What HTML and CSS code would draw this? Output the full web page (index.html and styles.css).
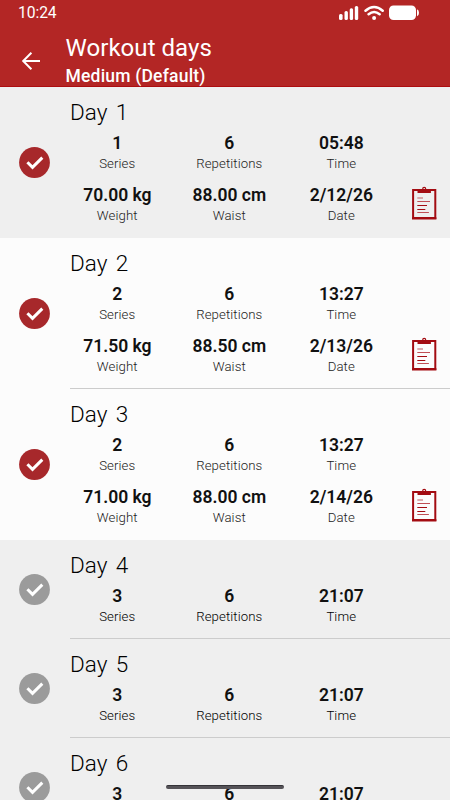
FILE: index.html
```html
<!DOCTYPE html>
<html lang="en">
<head>
<meta charset="utf-8">
<title>Workout days</title>
<link rel="stylesheet" href="styles.css">
</head>
<body>
<svg class="defs" width="0" height="0" aria-hidden="true">
  <symbol id="check" viewBox="0 0 31 31"><circle cx="15.5" cy="15.5" r="15.4" fill="currentColor"/><path d="M8.4 15.3l5.1 5.1 9.8-9.8" fill="none" stroke="#fff" stroke-width="3"/></symbol>
  <symbol id="clip" viewBox="0 0 25 34"><path d="M1.1 4h22.2v28H1.1z" fill="none" stroke="#a30c12" stroke-width="2"/><path d="M0 31.2h24.4v2.2H0zM5.5 4h13.4v3H5.5z" fill="#a30c12"/><circle cx="12.2" cy="2.9" r="1.5" fill="none" stroke="#a30c12" stroke-width="1.2"/><path d="M5.3 15.5H18M5.3 26.5h11.6" stroke="#c05056"/><path d="M5.3 12h5.7" stroke="#d18b8e" stroke-width="1.4"/><path d="M5.3 19.5h9.7M5.3 23.5h8" stroke="#a30c12"/></symbol>
</svg>
<div class="screen">
  <header>
    <div class="status">
      <span class="clock">10:24</span>
      <svg width="82" height="18" viewBox="0 0 82 18" fill="#fff">
        <rect x="1" y="10" width="3.6" height="6" rx="1.5"/><rect x="6.5" y="7" width="3.4" height="9" rx="1.5"/><rect x="11.7" y="4.2" width="3.4" height="11.8" rx="1.5"/><rect x="16.8" y="2" width="3.4" height="14" rx="1.5"/>
        <path d="M27.5 6.7q8.6-7.4 17.2 0M30.6 10.3q5.5-4.7 11 0" fill="none" stroke="#fff" stroke-width="2.5" stroke-linecap="round"/><circle cx="36.1" cy="14" r="2"/>
        <rect x="51" y="1.5" width="27" height="14.5" rx="4.5"/><path d="M79 5.3q2 .5 2 3.5t-2 3.5z"/>
      </svg>
    </div>
    <div class="bar">
      <svg class="back" width="20" height="20" viewBox="0 0 20 20" fill="none" stroke="#fff" stroke-width="2"><path d="M19 10H2.3M10.4 1.8L2.2 10l8.2 8.2"/></svg>
      <div><h1>Workout days</h1><p class="level">Medium (Default)</p></div>
    </div>
  </header>
  <main>
    <section class="day shaded">
      <svg class="mark"><use href="#check"/></svg>
      <h2>Day <span>1</span></h2>
      <div class="stats">
        <div><b>1</b><small>Series</small></div><div><b>6</b><small>Repetitions</small></div><div><b>05:48</b><small>Time</small></div>
        <div><b>70.00 kg</b><small>Weight</small></div><div><b>88.00 cm</b><small>Waist</small></div><div><b>2/12/26</b><small>Date</small></div>
      </div>
      <svg class="note"><use href="#clip"/></svg>
    </section>
    <section class="day lined">
      <svg class="mark"><use href="#check"/></svg>
      <h2>Day <span>2</span></h2>
      <div class="stats">
        <div><b>2</b><small>Series</small></div><div><b>6</b><small>Repetitions</small></div><div><b>13:27</b><small>Time</small></div>
        <div><b>71.50 kg</b><small>Weight</small></div><div><b>88.50 cm</b><small>Waist</small></div><div><b>2/13/26</b><small>Date</small></div>
      </div>
      <svg class="note"><use href="#clip"/></svg>
    </section>
    <section class="day">
      <svg class="mark"><use href="#check"/></svg>
      <h2>Day <span>3</span></h2>
      <div class="stats">
        <div><b>2</b><small>Series</small></div><div><b>6</b><small>Repetitions</small></div><div><b>13:27</b><small>Time</small></div>
        <div><b>71.00 kg</b><small>Weight</small></div><div><b>88.00 cm</b><small>Waist</small></div><div><b>2/14/26</b><small>Date</small></div>
      </div>
      <svg class="note"><use href="#clip"/></svg>
    </section>
    <section class="day shaded pending lined">
      <svg class="mark"><use href="#check"/></svg>
      <h2>Day <span>4</span></h2>
      <div class="stats"><div><b>3</b><small>Series</small></div><div><b>6</b><small>Repetitions</small></div><div><b>21:07</b><small>Time</small></div></div>
    </section>
    <section class="day shaded pending lined">
      <svg class="mark"><use href="#check"/></svg>
      <h2>Day <span>5</span></h2>
      <div class="stats"><div><b>3</b><small>Series</small></div><div><b>6</b><small>Repetitions</small></div><div><b>21:07</b><small>Time</small></div></div>
    </section>
    <section class="day shaded pending lined">
      <svg class="mark"><use href="#check"/></svg>
      <h2>Day <span>6</span></h2>
      <div class="stats"><div><b>3</b></div><div><b>6</b></div><div><b>21:07</b></div></div>
    </section>
  </main>
  <div class="home"></div>
</div>
</body>
</html>
```
FILE: styles.css
```css
* { box-sizing: border-box; }
body { margin: 0; font-family: Roboto, sans-serif; color: #111; }
h1, h2, p { margin: 0; font-weight: 400; }
.defs { position: absolute; }
.screen { position: relative; width: 450px; height: 800px; overflow: hidden; background: #fcfcfc; }
header { height: 87px; background: #b32625; color: #fff; border-bottom: 1px solid #ad0d10; }
.status { height: 26px; display: flex; justify-content: space-between; padding: 4px 30px 0 18px; }
.clock { font-size: 15.7px; line-height: 18px; letter-spacing: -.1px; }
.bar { display: flex; padding-left: 21px; }
.back { margin: 25px 24.5px 0 0; flex: none; }
h1 { font-size: 24px; line-height: 30px; margin-top: 7px; letter-spacing: .05px; }
.level { font-size: 17.5px; line-height: 20px; margin-top: 3px; font-weight: 500; letter-spacing: .2px; }
.day {
  display: grid;
  grid-template-columns: 61px 336px 53px;
  grid-template-rows: 46px 1fr;
  height: 151px;
}
.shaded { background: #efefef; }
.pending { height: 99px; }
.lined { background-image: linear-gradient(#ccc, #ccc); background-size: 380px 1.5px; background-position: 70px 100%; background-repeat: no-repeat; }
.mark { grid-column: 1; grid-row: 1 / 3; width: 31px; height: 31px; align-self: center; margin-left: 19px; color: #a7282b; }
.pending .mark { color: #9b9b9b; }
h2 { grid-column: 2; grid-row: 1; padding: 10px 0 0 9px; font-size: 22.5px; font-weight: 350; line-height: 30px; letter-spacing: .1px; color: #000; }
h2 span { margin-left: 2.5px; }
.stats { grid-column: 2; grid-row: 2; display: grid; grid-template-columns: repeat(3, 112px); align-content: start; row-gap: 11px; text-align: center; }
.stats b { display: block; font-size: 17.5px; line-height: 20px; font-weight: 600; padding-left: .7px; }
.stats small { display: block; font-size: 13.2px; font-weight: 350; line-height: 20px; margin-top: 1px; letter-spacing: .1px; color: #222; padding-left: .5px; }
.pending small { color: #000; }
.note { grid-column: 3; grid-row: 1 / 3; width: 25px; height: 34px; margin: 99px 0 0 15px; }
.home { position: absolute; left: 166px; top: 785px; width: 118px; height: 4px; border-radius: 2px; background: #555358; border-top: 1px solid #343338; }
```
